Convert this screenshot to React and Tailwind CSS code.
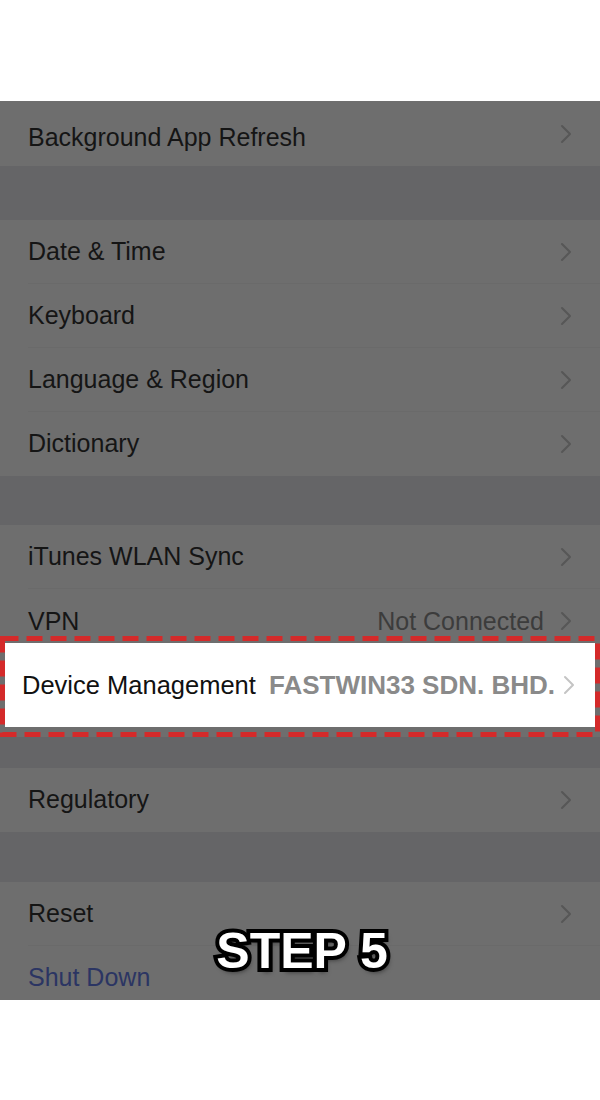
import React from 'react';

const font = { fontFamily: '"Liberation Sans", Arial, sans-serif' };

const Chevron = ({ className = 'text-[#575757]' }) => (
  <svg width="12" height="20" viewBox="0 0 12 20" className={className} fill="none">
    <path d="M2 2 L10 10 L2 18" stroke="currentColor" strokeWidth="2" strokeLinecap="round" strokeLinejoin="round" />
  </svg>
);

const Row = ({ label, value, labelClass = 'text-[#151515]', border = true, chevron = true }) => (
  <div className="h-16 flex items-center pl-7 pr-7 bg-[#6e6e6e] relative">
    <span className={`flex-1 text-[25px] ${labelClass}`}>{label}</span>
    {value && <span className="text-[25px] text-[#3c3c3c] mr-4">{value}</span>}
    {chevron && <Chevron />}
    {border && <div className="absolute left-7 right-0 bottom-0 h-px bg-[#6a6a6a]" />}
  </div>
);

const Gap = ({ h }) => <div className={`${h} bg-[#656567]`} />;

export default function App() {
  return (
    <div className="w-[600px] h-[1100px] bg-white" style={font}>
      <div className="h-[101px]" />
      <div className="relative h-[899px] overflow-hidden bg-[#6e6e6e]">
        <div className="h-[65px] flex items-center pl-7 pr-7 bg-[#6e6e6e]">
          <span className="flex-1 text-[25px] text-[#151515] pt-[8px]">Background App Refresh</span>
          <Chevron />
        </div>
        <Gap h="h-[54px]" />
        <Row label="Date & Time" />
        <Row label="Keyboard" />
        <Row label="Language & Region" />
        <Row label="Dictionary" border={false} />
        <Gap h="h-[49px]" />
        <Row label="iTunes WLAN Sync" />
        <div className="h-[47px] flex items-start pt-[18px] pl-7 pr-7 bg-[#6e6e6e]">
          <span className="flex-1 text-[25px] leading-[28px] text-[#151515]">VPN</span>
          <span className="text-[25px] leading-[28px] text-[#3c3c3c] mr-4">Not Connected</span>
          <div className="pt-1"><Chevron /></div>
        </div>
        <div className="relative px-[5px] pt-[7px] pb-[10px] bg-[#6e6e6e]">
          <div className="h-[84px] bg-white flex items-center pl-[17px] pr-5">
            <span className="text-[25.5px] text-[#111111]">Device Management</span>
            <span className="flex-1 text-right text-[26px] font-bold text-[#8a8a8a] mr-2">FASTWIN33 SDN. BHD.</span>
            <Chevron className="text-[#c4c4c4]" />
          </div>
          <svg className="absolute inset-0 w-full h-full pointer-events-none" preserveAspectRatio="none">
            <rect x="2.5" y="2.5" width="595" height="96" fill="none" stroke="#d42a2a" strokeWidth="5" strokeDasharray="16 8" />
          </svg>
        </div>
        <Gap h="h-[31px]" />
        <Row label="Regulatory" border={false} />
        <Gap h="h-[50px]" />
        <Row label="Reset" />
        <Row label="Shut Down" labelClass="text-[#2b3563]" border={false} chevron={false} />
        <div className="absolute left-0 right-0 top-[825px] flex justify-center">
          <span className="pl-1 text-[50px] font-bold text-white leading-none [-webkit-text-stroke:8px_black] [paint-order:stroke_fill] [text-shadow:2px_4px_5px_rgba(0,0,0,0.55)]">
            STEP 5
          </span>
        </div>
      </div>
    </div>
  );
}
